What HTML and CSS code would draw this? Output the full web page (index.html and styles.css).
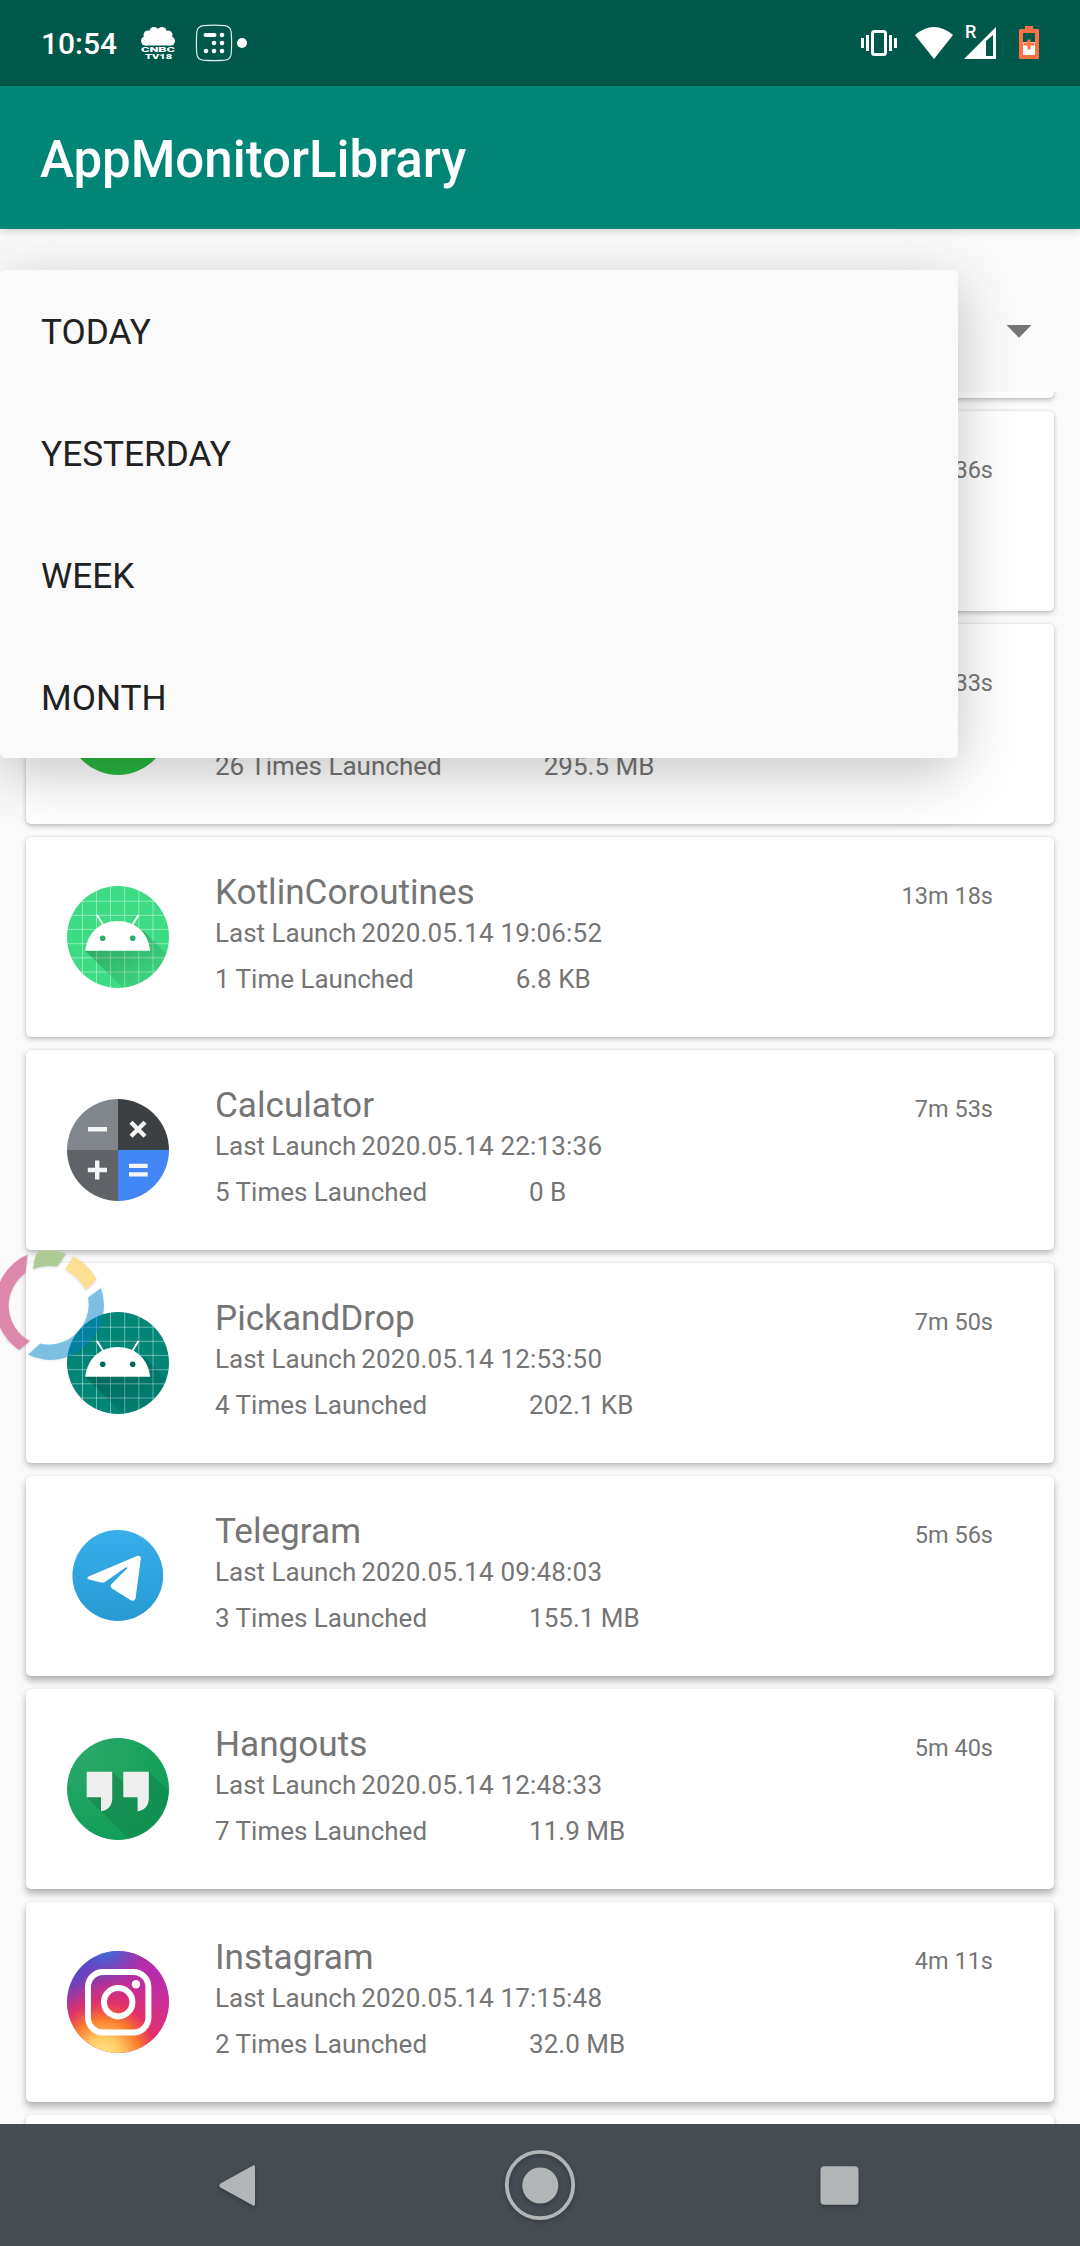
FILE: index.html
```html
<!DOCTYPE html>
<html lang="en">
<head>
<meta charset="utf-8">
<title>AppMonitorLibrary</title>
<link rel="stylesheet" href="styles.css">
</head>
<body>
<div class="screen">
  <header class="status">
    <span class="clock">10:54</span>
    <svg class="ic-news" width="36" height="36" viewBox="0 0 36 36" fill="#fff">
      <circle cx="5.500" cy="16" r="4.500"/><circle cx="8" cy="10" r="4.500"/><circle cx="14" cy="6.500" r="4.500"/><circle cx="22" cy="6.500" r="4.500"/><circle cx="28" cy="10" r="4.500"/><circle cx="30.500" cy="16" r="4.500"/><path d="M5 9h26v11.500H5z"/>
      <text class="news-a" x="1" y="27" textLength="34" lengthAdjust="spacingAndGlyphs">CNBC</text>
      <text class="news-b" x="5" y="33.500" textLength="27" lengthAdjust="spacingAndGlyphs">TV18</text>
    </svg>
    <svg class="ic-calc" width="38" height="38" viewBox="0 0 38 38" fill="#fff">
      <path d="M8 1.700Q19 .5 30 1.700Q35.500 2.500 36.200 8Q37 19 36.200 30Q35.500 35.500 30 36.200Q19 37.200 8 36.200Q2.500 35.500 1.800 30Q1 19 1.800 8Q2.500 2.500 8 1.700z" fill="none" stroke="#dcebe8" stroke-width="1.200"/>
      <rect x="8.500" y="9" width="13" height="4" rx="2"/><circle cx="27" cy="11" r="2.300"/><circle cx="19" cy="19" r="2.300"/><circle cx="27" cy="19" r="2.300"/><circle cx="11" cy="27" r="2.300"/><circle cx="19" cy="27" r="2.300"/><circle cx="27" cy="27" r="2.300"/>
    </svg>
    <span class="more-dot"></span>
    <svg class="ic-system" width="180" height="40" viewBox="860 23 180 40" fill="#fff">
      <rect x="872.500" y="31.500" width="13" height="23" rx="2" fill="none" stroke="#fff" stroke-width="3"/>
      <path d="M866 35h3v16h-3zM861 38h3v10h-3zM889 35h3v16h-3zM894 38h3v10h-3z"/>
      <path d="M915 35Q934 19 953 35L934 59z"/>
      <path fill-rule="evenodd" d="M964 59L996 27V59zM986 41V56H993V35z"/>
      <text class="roam" x="965" y="38">R</text>
      <path fill="#ff7043" d="M1025 26h8v3h4.500q1.500 0 1.500 1.500v27q0 1.500-1.500 1.500h-17q-1.500 0-1.500-1.500v-27q0-1.500 1.500-1.500h4.500z"/>
      <path fill="#00584b" d="M1023 33h12v9h-12z"/><path d="M1023 42h12v13h-12z"/>
      <path fill="#ff7043" d="M1027.500 39.500h3v3h4v3h-4v4h-3v-4h-4v-3h4z"/>
    </svg>
  </header>
  <div class="appbar"><h1>AppMonitorLibrary</h1></div>
  <div class="filter"><svg width="26" height="13" viewBox="0 0 26 13"><path d="M.5 0H25.500L13 12.800z" fill="#757575"/></svg></div>

  <main class="list">
    <article class="card card-cut"></article>
    <article class="card"><span class="time">36s</span></article>
    <article class="card">
      <svg class="icon" viewBox="0 0 102 102"><circle cx="51" cy="51" r="51" fill="#29b942"/></svg>
      <div class="info"><h2>&nbsp;</h2><p class="last">&nbsp;</p><p class="usage"><span>26 Times Launched</span><span>295.5 MB</span></p></div>
      <span class="time">33s</span>
    </article>
    <article class="card">
      <svg class="icon" viewBox="0 0 102 102">
        <defs>
          <clipPath id="disc"><circle cx="51" cy="51" r="51"/></clipPath>
          <linearGradient id="cast" x1=".1" y1="0" x2=".8" y2=".8"><stop offset="0" stop-opacity=".27"/><stop offset="1" stop-opacity=".04"/></linearGradient>
          <g id="robot">
            <path d="M15.500 0V102M29.500 0V102M43.500 0V102M57.700 0V102M71.800 0V102M86 0V102M0 15.200H102M0 29.300H102M0 43.400H102M0 57.700H102M0 71.800H102M0 86H102" stroke="#fff" stroke-opacity=".42" stroke-width="1" fill="none"/>
            <path d="M18.300 64.700L57 103H103V71L76 44.500z" fill="url(#cast)"/>
            <path d="M18.300 64.700C20 46.500 34 35 50.700 35S81.500 46.500 83 64.700z" fill="#fff"/>
            <path d="M30 29L36.500 39.500M71.500 29L65 39.500" stroke="#fff" stroke-width="1.900"/>
          </g>
        </defs>
        <g clip-path="url(#disc)"><path d="M0 0H102V102H0z" fill="#3ddc84"/><use href="#robot"/><circle cx="35.700" cy="52.300" r="2.800" fill="#2faa67"/><circle cx="65.700" cy="52.300" r="2.800" fill="#2faa67"/></g>
      </svg>
      <div class="info"><h2>KotlinCoroutines</h2><p class="last">Last Launch <span>2020.05.14 19:06:52</span></p><p class="usage"><span>1 Time Launched</span><span>6.8 KB</span></p></div>
      <span class="time">13m 18s</span>
    </article>
    <article class="card">
      <svg class="icon" viewBox="0 0 102 102">
        <path d="M51 51V0A51 51 0 0 0 0 51z" fill="#80868b"/><path d="M51 51V0A51 51 0 0 1 102 51z" fill="#3c4043"/><path d="M51 51V102A51 51 0 0 1 0 51z" fill="#5f6368"/><path d="M51 51V102A51 51 0 0 0 102 51z" fill="#4285f4"/>
        <path d="M21 30.200H40M20.800 71H40M30.200 61.500V80.500M62 66.900H80.700M62 75.400H80.700M64 23.300L78 37.300M78 23.300L64 37.300" stroke="#f5f5f5" stroke-width="4.400" fill="none"/>
      </svg>
      <div class="info"><h2>Calculator</h2><p class="last">Last Launch <span>2020.05.14 22:13:36</span></p><p class="usage"><span>5 Times Launched</span><span>0 B</span></p></div>
      <span class="time">7m 53s</span>
    </article>
    <article class="card">
      <svg class="icon" viewBox="0 0 102 102"><g clip-path="url(#disc)"><path d="M0 0H102V102H0z" fill="#008577"/><use href="#robot"/><circle cx="35.700" cy="52.300" r="2.800" fill="#00695e"/><circle cx="65.700" cy="52.300" r="2.800" fill="#00695e"/></g></svg>
      <div class="info"><h2>PickandDrop</h2><p class="last">Last Launch <span>2020.05.14 12:53:50</span></p><p class="usage"><span>4 Times Launched</span><span>202.1 KB</span></p></div>
      <span class="time">7m 50s</span>
    </article>
    <article class="card">
      <svg class="icon" viewBox="0 0 102 102">
        <defs><linearGradient id="tg" x1="0" y1="0" x2="0" y2="1"><stop stop-color="#38aeeb"/><stop offset="1" stop-color="#279ad1"/></linearGradient></defs>
        <circle cx="50.800" cy="50.500" r="45.400" fill="url(#tg)"/>
        <path d="M21.500 51.500L70 31Q74 30 73.800 34L68.500 73.500Q67 77 63.500 75L45 63.500Q42.500 61 44.500 59L60.200 43.500Q61 41.500 58.500 42.600L38 57Q36 58.300 33 57.300L22 54.500Q19 53 21.500 51.500z" fill="#fff"/>
      </svg>
      <div class="info"><h2>Telegram</h2><p class="last">Last Launch <span>2020.05.14 09:48:03</span></p><p class="usage"><span>3 Times Launched</span><span>155.1 MB</span></p></div>
      <span class="time">5m 56s</span>
    </article>
    <article class="card">
      <svg class="icon" viewBox="0 0 102 102">
        <defs><radialGradient id="ho" cx=".2" cy=".15" r=".95"><stop stop-color="#2aa967"/><stop offset="1" stop-color="#0f9d58"/></radialGradient><linearGradient id="hs" x1="0" y1="0" x2="1" y2="1"><stop stop-opacity=".15"/><stop offset="1" stop-opacity=".06"/></linearGradient></defs>
        <circle cx="51" cy="51" r="51" fill="url(#ho)"/>
        <g clip-path="url(#disc)"><path d="M19.700 59L64 103H103V54L82 33.700V59L56.300 44.500L45 33.700V59z" fill="url(#hs)"/></g>
        <path id="quote" d="M19.700 33.700H45.200V60Q45.200 71.500 34 73.300V59.200H19.700z" fill="#eee"/><use href="#quote" x="36.600"/>
      </svg>
      <div class="info"><h2>Hangouts</h2><p class="last">Last Launch <span>2020.05.14 12:48:33</span></p><p class="usage"><span>7 Times Launched</span><span>11.9 MB</span></p></div>
      <span class="time">5m 40s</span>
    </article>
    <article class="card">
      <svg class="icon" viewBox="0 0 102 102">
        <defs>
          <linearGradient id="iga" x1=".2" y1=".1" x2=".85" y2=".75"><stop stop-color="#5b45c8"/><stop offset=".28" stop-color="#a2369f"/><stop offset=".6" stop-color="#d92f7f"/><stop offset="1" stop-color="#d52f8c"/></linearGradient>
          <radialGradient id="igb" cx=".36" cy="1.020" r=".76"><stop stop-color="#ffe58a"/><stop offset=".22" stop-color="#ffcb66"/><stop offset=".46" stop-color="#fb7c2c"/><stop offset=".68" stop-color="#e8305f" stop-opacity=".8"/><stop offset="1" stop-color="#d52f7c" stop-opacity="0"/></radialGradient>
          <radialGradient id="igc" cx=".4" cy="-.05" r=".4"><stop stop-color="#2d7be5"/><stop offset="1" stop-color="#6a40c4" stop-opacity="0"/></radialGradient>
          <radialGradient id="igd" cx=".85" cy=".2" r=".5"><stop stop-color="#b42bb0"/><stop offset="1" stop-color="#b42bb0" stop-opacity="0"/></radialGradient>
        </defs>
        <circle cx="51" cy="51" r="51" fill="url(#iga)"/><circle cx="51" cy="51" r="51" fill="url(#igd)"/><circle cx="51" cy="51" r="51" fill="url(#igb)"/><circle cx="51" cy="51" r="51" fill="url(#igc)"/>
        <rect x="21" y="21" width="60.400" height="60.600" rx="15" fill="none" stroke="#fff" stroke-width="6"/><circle cx="51.200" cy="51.200" r="14.200" fill="none" stroke="#fff" stroke-width="6"/><circle cx="69" cy="33.300" r="4.200" fill="#fff"/>
      </svg>
      <div class="info"><h2>Instagram</h2><p class="last">Last Launch <span>2020.05.14 17:15:48</span></p><p class="usage"><span>2 Times Launched</span><span>32.0 MB</span></p></div>
      <span class="time">4m 11s</span>
    </article>
    <article class="card"></article>
  </main>

  <nav class="nav">
    <svg width="1080" height="122" viewBox="0 2124 1080 122">
      <g class="nav-keys" fill="#b2b6b7">
        <path d="M253 2165.500Q255 2164.500 255 2167V2204Q255 2206.500 253 2205.500L220.500 2187.500Q218 2185.500 220.500 2183.500z"/>
        <circle cx="540" cy="2185" r="33.200" fill="none" stroke="#b2b6b7" stroke-width="3.800"/><circle cx="540.300" cy="2185.500" r="18"/>
        <rect x="820.500" y="2166.300" width="38" height="38.500" rx="4"/>
      </g>
    </svg>
  </nav>

  <ul class="popup"><li>TODAY</li><li>YESTERDAY</li><li>WEEK</li><li>MONTH</li></ul>

  <svg class="bubble" width="114" height="122" viewBox="0 1246 114 122">
    <path fill="#dd88aa" d="M27.500 1254.500A55 55 0 0 0 19 1350L30 1341A40 40 0 0 1 25.500 1273z"/>
    <path fill="#aeca95" d="M33 1269L34.500 1260Q36 1254 38.500 1251.500A55 55 0 0 1 66 1253.500L57.500 1266.500Q44 1264.500 33 1269z"/>
    <path fill="#fddf93" d="M65 1269.500L73.500 1256.500Q89 1264.500 96.500 1279.500L86 1290Q78 1276 65 1269.500z"/>
    <path fill="#0088d6" fill-opacity=".48" d="M88 1297.500L101 1288A55 55 0 0 1 104 1305A55 55 0 0 1 49.500 1360A55 55 0 0 1 28 1354.500L40 1343.500A40 40 0 0 0 88 1297.500z"/>
  </svg>
</div>
</body>
</html>
```
FILE: styles.css
```css
* { box-sizing: border-box; margin: 0; padding: 0; }
body { background: #fafafa; font-family: Roboto, sans-serif; }
.screen { position: relative; width: 1080px; height: 2246px; overflow: hidden; display: flex; flex-direction: column; background: #fafafa; }
.status { height: 86px; flex: none; background: #00584b; display: flex; align-items: center; padding: 0 40px 0 41px; }
.clock { color: #fff; font-size: 30px; font-weight: 500; line-height: 36px; width: 99px; margin-top: 1px; }
.ic-news { margin-right: 19px; }
.news-a { font: 900 8px "Roboto", sans-serif; }
.news-b { font: 900 6.5px "Roboto", sans-serif; }
.more-dot { width: 10px; height: 10px; border-radius: 50%; background: #fff; margin-left: 4px; }
.ic-system { margin-left: auto; overflow: visible; }
.roam { font: 500 18px Roboto, sans-serif; }
.appbar { height: 143px; flex: none; background: #008577; display: flex; align-items: center; padding-left: 40px; box-shadow: 0 2px 9px rgba(0,0,0,.16); position: relative; }
.appbar h1 { font-size: 51px; font-weight: 500; line-height: 60px; color: #fff; margin-top: 4px; white-space: nowrap; }
.filter { height: 163px; flex: none; display: flex; justify-content: flex-end; padding: 96px 48px 0 0; }
.filter svg { display: block; }
.list { height: 1732px; flex: none; overflow: hidden; padding: 0 26px; display: flex; flex-direction: column; gap: 13px; }
.card { height: 200px; flex: none; background: #fff; border-radius: 5px; display: flex; align-items: flex-start; padding: 34px 61px 0 41px; color: #757575; box-shadow: 0 2px 5px rgba(0,0,0,.24), 0 0 2px rgba(0,0,0,.1); }
.card-cut { margin-top: -194px; }
.card:nth-child(n+5) { box-shadow: 0 3px 6px rgba(0,0,0,.26), 0 0 2px rgba(0,0,0,.1); }
.card:nth-child(n+7) { box-shadow: 0 5px 7px rgba(0,0,0,.28), 0 0 2px rgba(0,0,0,.1); }
.icon { width: 102px; height: 102px; margin-top: 15px; flex: none; }
.info { margin-left: 46px; white-space: nowrap; }
.info h2 { font-size: 35.15px; font-weight: 400; line-height: 42px; }
.info p { font-size: 26px; line-height: 30px; }
.info .last { margin-top: 5px; }
.last span { margin-left: -1.5px; letter-spacing: .19px; }
.info .usage { margin-top: 16px; display: flex; gap: 102px; }
.time { margin-left: auto; margin-top: 11px; font-size: 23.5px; line-height: 28px; white-space: nowrap; }
.nav { height: 122px; flex: none; background: #454c52; }
.nav svg { display: block; }
.nav-keys { filter: drop-shadow(0 2px 2px rgba(0,0,0,.25)); }
.popup { position: absolute; left: 0; top: 270px; width: 958px; height: 488px; background: #fafafa; border-radius: 5px; list-style: none; box-shadow: 0 14px 58px rgba(0,0,0,.24); }
.popup li { height: 122px; padding-left: 41px; font-size: 35.2px; line-height: 124px; color: #212121; }
.bubble { position: absolute; left: 0; top: 1246px; filter: drop-shadow(0 1px 1px rgba(0,0,0,.14)); }
```
